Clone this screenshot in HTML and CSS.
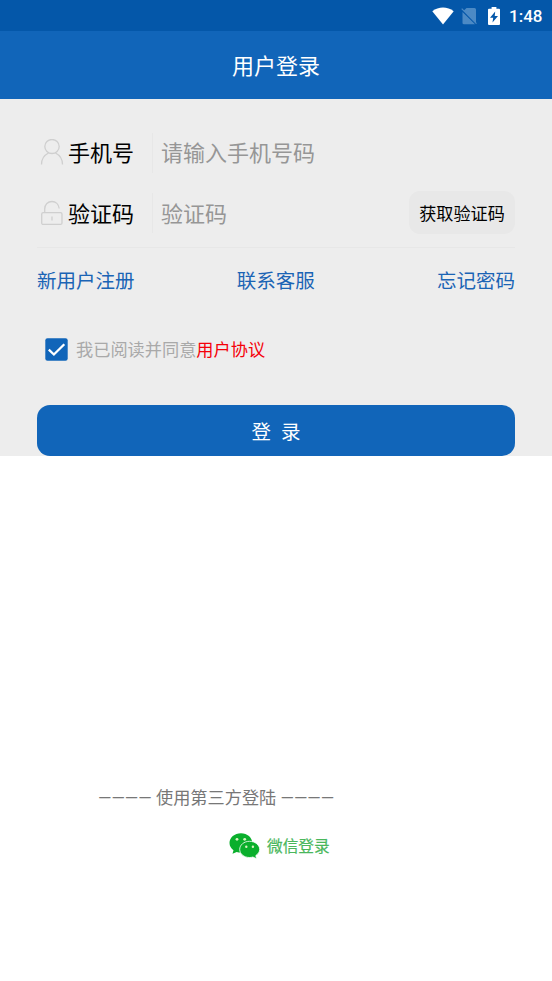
FILE: index.html
```html
<!DOCTYPE html>
<html lang="zh-CN">
<head>
<meta charset="utf-8">
<title>用户登录</title>
<link rel="stylesheet" href="styles.css">
</head>
<body>
<div class="status">
  <svg class="wifi" width="22" height="18" viewBox="0 0 22 18"><path fill="#fff" d="M0.3 4.3C6.5-.7 15.500-.7 21.700 4.300L11 17.500z"/></svg>
  <svg class="nosim" width="16" height="18" viewBox="0 0 16 18"><path fill="#4c8ac5" d="M5.500 1H13.500Q15 1 15 2.500V16L2.700 3.700zM1.500 5L14 17.300H3Q1.500 17.300 1.500 16z"/><path stroke="#4c8ac5" stroke-width="1.300" d="M.7 1.600L15.500 16.600"/></svg>
  <svg class="battery" width="12" height="18" viewBox="0 0 12 18"><path fill="#fff" d="M3.600 0H8.400V1.800H11Q12 1.800 12 2.800V17Q12 18 11 18H1Q0 18 0 17V2.800Q0 1.800 1 1.800H3.600z"/><path fill="#0457a9" d="M7.200 4.400L2 10.800H5.200L4.500 15.400L10 8.900H6.700z"/></svg>
  <span class="clock">1:48</span>
</div>
<header class="header">用户登录</header>
<main class="form">
  <div class="row">
    <svg class="icon" width="24" height="27" viewBox="0 0 24 27" fill="none" stroke="#cfcfcf" stroke-width="1.300"><ellipse cx="12" cy="7.500" rx="7.200" ry="7"/><path d="M1.500 25.500C1.500 19.500 4.500 16 8.500 14M15.500 14C19.500 16 22.500 19.500 22.500 25.500"/></svg>
    <label class="label">手机号</label>
    <div class="field">请输入手机号码</div>
  </div>
  <div class="row">
    <svg class="icon" width="24" height="27" viewBox="0 0 24 27" fill="none" stroke="#cfcfcf" stroke-width="1.300"><rect x="1.700" y="12.700" width="20.300" height="11.700" rx="1.500"/><path d="M4.700 12.500V9C4.700 4.500 8 1.500 12 1.500C15.800 1.500 18.700 4.500 19.200 8.500M12 16.500V20.500"/></svg>
    <label class="label">验证码</label>
    <div class="field">验证码</div>
    <button class="code">获取验证码</button>
  </div>
  <nav class="links"><a>新用户注册</a><a>联系客服</a><a>忘记密码</a></nav>
  <div class="agree">
    <svg class="check" width="23" height="23" viewBox="0 0 23 23"><rect x=".3" y=".3" width="22.400" height="22.400" rx="2.200" fill="#1165b9"/><path d="M3.800 11.600L8.900 16.500L19.300 6.200" fill="none" stroke="#fff" stroke-width="2.300"/></svg>
    <span class="terms-text">我已阅读并同意<a class="terms">用户协议</a></span>
  </div>
  <button class="login"><span>登</span><span>录</span></button>
</main>
<section class="third">
  <p class="divider">———— 使用第三方登陆 ————</p>
  <a class="wechat">
    <svg width="31" height="26" viewBox="0 0 31 26"><path fill="#0aaf2c" d="M12 .2C5.500.2.500 4.500.500 10C.5 13 2.100 15.500 4.500 17.200L3.500 20.800L7.700 18.900Q9.900 19.600 12.500 19.500C18.500 19.200 23.300 15.200 23.300 10C23.300 4.500 18.300.2 12 .2z"/><path fill="#0aaf2c" stroke="#fff" stroke-width=".8" d="M20.500 8.300C15 8.300 10.700 12 10.700 16.400C10.700 20.900 15 24.500 20.500 24.500Q22.200 24.500 23.900 24L27.600 25.800L26.800 22.600C29 21 30.700 18.900 30.700 16.400C30.700 12 26 8.300 20.500 8.300z"/><g fill="#d8f3bf"><circle cx="8" cy="6.300" r="1.400"/><circle cx="15.700" cy="6.300" r="1.400"/><circle cx="17.300" cy="13.700" r="1.200"/><circle cx="23.900" cy="13.700" r="1.200"/></g></svg>
    <span class="wechat-text">微信登录</span>
  </a>
</section>
</body>
</html>
```
FILE: styles.css
```css
* { box-sizing: border-box; }
body {
  margin: 0;
  height: 981px;
  overflow: hidden;
  background: #fff;
  font-family: Roboto, "Noto Sans CJK SC", sans-serif;
}
button { border: 0; padding: 0; font-family: inherit; }
svg { display: block; flex: none; }
.status {
  height: 31px;
  padding: 0 10px 0 0;
  display: flex;
  align-items: center;
  justify-content: flex-end;
  background: #0457a9;
}
.nosim { margin-left: 7px; }
.battery { margin-left: 11px; }
.clock {
  margin: 0 0 0 9px;
  width: 33px;
  color: #fff;
  font-size: 17px;
  font-weight: 500;
  line-height: 20px;
}
.header {
  height: 68px;
  padding-top: 2px;
  background: #1165b9;
  color: #fff;
  font-size: 22px;
  line-height: 68px;
  text-align: center;
}
.form {
  height: 357px;
  padding: 23px 37px 0;
  background: #ededed;
}
.row {
  height: 61px;
  display: flex;
  align-items: center;
}
.row + .row { height: 65px; padding-bottom: 4px; border-bottom: 1px solid #e7e7e7; }
.icon { margin: 0 4px 0 3px; }
.label {
  width: 84px;
  height: 40px;
  color: #000;
  font-size: 22px;
  line-height: 42px;
}
.field {
  flex: 1;
  height: 40px;
  padding-left: 8px;
  border-left: 1px solid #e7e7e7;
  color: #969696;
  font-size: 22px;
  line-height: 42px;
}
.row + .row .label,
.row + .row .field { line-height: 44px; }
.code {
  width: 106px;
  height: 43px;
  margin-bottom: 1px;
  padding-bottom: 1px;
  border-radius: 11px;
  background: #e8e8e8;
  color: #000;
  font-size: 17.100px;
}
.links {
  display: flex;
  justify-content: space-between;
  height: 64px;
  color: #1b64b5;
  font-size: 19.500px;
  line-height: 67px;
}
.links a:nth-child(2) { margin-left: -20px; }
.agree {
  display: flex;
  align-items: center;
  height: 74px;
  padding-left: 8px;
  color: #a9a9a9;
  font-size: 17.200px;
}
.check { margin-right: 8px; }
.terms-text { padding-bottom: 1px; }
.terms { color: #f50008; }
.login {
  display: flex;
  align-items: center;
  justify-content: center;
  gap: 10px;
  width: 100%;
  height: 51px;
  margin-top: 19px;
  border-radius: 13px;
  background: #1165b9;
  color: #fff;
  font-size: 19.500px;
}
.third { padding-top: 327px; }
.divider {
  margin: 0;
  padding-left: 98px;
  color: #777;
  font-size: 17.200px;
  line-height: 30px;
}
.wechat {
  display: flex;
  align-items: center;
  gap: 7px;
  height: 26px;
  margin: 20px 0 0 229px;
  color: #4ab75c;
  font-size: 15.700px;
}
.wechat-text { padding-bottom: 2px; -webkit-text-stroke: .2px #4ab75c; }
```
